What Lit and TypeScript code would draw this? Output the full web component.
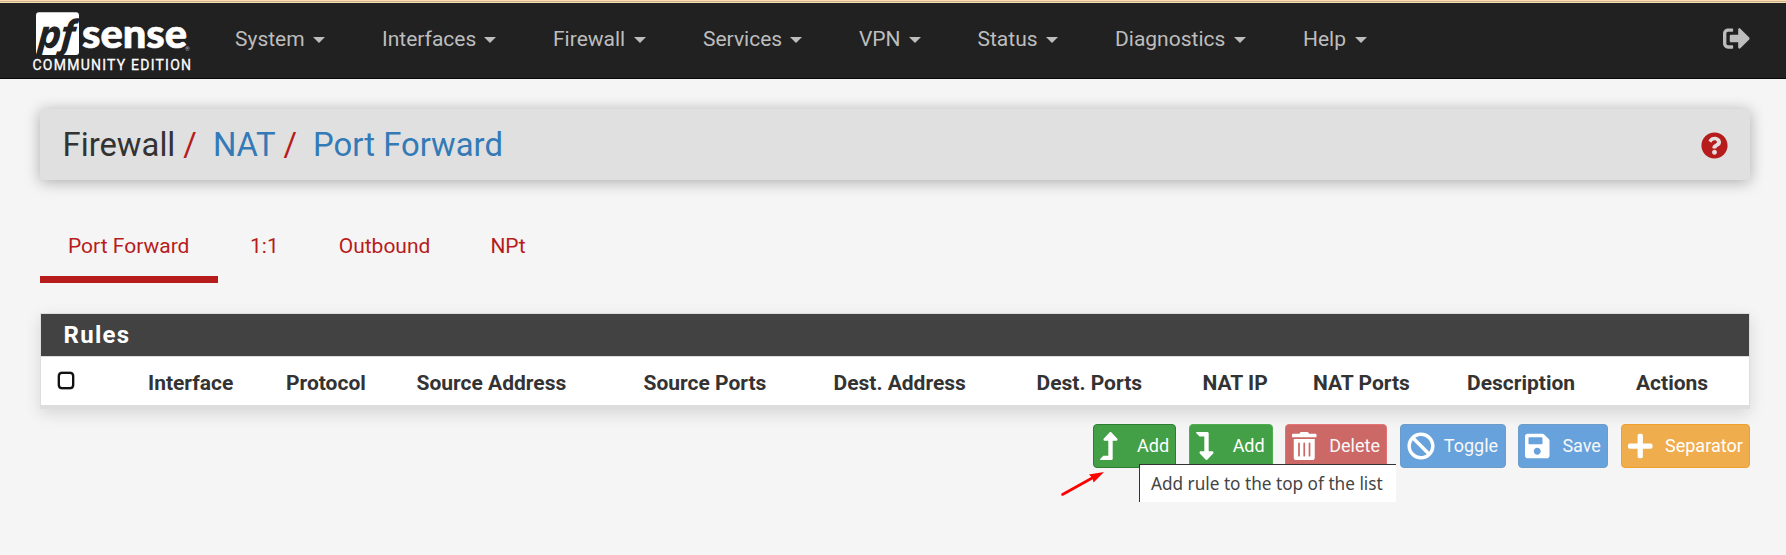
import { LitElement, html, css, svg } from "lit";
import { customElement } from "lit/decorators.js";

const levelUp =
  "M313.553 119.669L209.587 7.666c-9.485-10.214-25.676-10.229-35.174 0L70.438 119.669C56.232 134.969 67.062 160 88.025 160H152v272H68.024a11.996 11.996 0 0 0-8.485 3.515l-56 56C-4.021 499.074 1.333 512 12.024 512H208c13.255 0 24-10.745 24-24V160h63.966c20.878 0 31.851-24.969 17.587-40.331z";
const trash =
  "M32 464a48 48 0 0 0 48 48h288a48 48 0 0 0 48-48V128H32zm272-256a16 16 0 0 1 32 0v224a16 16 0 0 1-32 0zm-96 0a16 16 0 0 1 32 0v224a16 16 0 0 1-32 0zm-96 0a16 16 0 0 1 32 0v224a16 16 0 0 1-32 0zM432 32H312l-9.4-18.7A24 24 0 0 0 281.1 0H166.8a23.72 23.72 0 0 0-21.4 13.3L136 32H16A16 16 0 0 0 0 48v32a16 16 0 0 0 16 16h416a16 16 0 0 0 16-16V48a16 16 0 0 0-16-16z";
const ban =
  "M256 8C119.034 8 8 119.033 8 256s111.034 248 248 248 248-111.034 248-248S392.967 8 256 8zm130.108 117.892c65.448 65.448 70 165.481 20.677 235.637L150.47 105.216c70.204-49.356 170.226-44.735 235.638 20.676zM125.892 386.108c-65.448-65.448-70-165.481-20.677-235.637L361.53 406.784c-70.203 49.356-170.226 44.736-235.638-20.676z";
const save =
  "M433.941 129.941l-83.882-83.882A48 48 0 0 0 316.118 32H48C21.49 32 0 53.49 0 80v352c0 26.51 21.49 48 48 48h352c26.51 0 48-21.49 48-48V163.882a48 48 0 0 0-14.059-33.941zM224 416c-35.346 0-64-28.654-64-64 0-35.346 28.654-64 64-64s64 28.654 64 64c0 35.346-28.654 64-64 64zm96-304.52V212c0 6.627-5.373 12-12 12H76c-6.627 0-12-5.373-12-12V108c0-6.627 5.373-12 12-12h228.52c3.183 0 6.235 1.264 8.485 3.515l3.48 3.48A11.996 11.996 0 0 1 320 111.48z";
const plus =
  "M416 208H272V64c0-17.67-14.33-32-32-32h-32c-17.67 0-32 14.33-32 32v144H32c-17.67 0-32 14.33-32 32v32c0 17.67 14.33 32 32 32h144v144c0 17.67 14.33 32 32 32h32c17.67 0 32-14.33 32-32V304h144c17.67 0 32-14.33 32-32v-32c0-17.67-14.33-32-32-32z";
const signOut =
  "M497 273L329 441c-15 15-41 4.5-41-17v-96H152c-13.3 0-24-10.7-24-24v-96c0-13.3 10.7-24 24-24h136V88c0-21.4 25.9-32 41-17l168 168c9.3 9.4 9.3 24.6 0 34zM192 436v-40c0-6.6-5.4-12-12-12H96c-17.7 0-32-14.3-32-32V160c0-17.7 14.3-32 32-32h84c6.6 0 12-5.4 12-12V76c0-6.6-5.4-12-12-12H96c-53 0-96 43-96 96v192c0 53 43 96 96 96h84c6.6 0 12-5.4 12-12z";
const question =
  "M504 256c0 136.997-111.043 248-248 248S8 392.997 8 256C8 119.083 119.043 8 256 8s248 111.083 248 248zM262.655 90c-54.497 0-89.255 22.957-116.549 63.758-3.536 5.286-2.353 12.415 2.715 16.258l34.699 26.31c5.205 3.947 12.621 3.008 16.665-2.122 17.864-22.658 30.113-35.797 57.303-35.797 20.429 0 45.698 13.148 45.698 32.958 0 14.976-12.363 22.667-32.534 33.976C247.128 238.528 216 254.941 216 296v4c0 6.627 5.373 12 12 12h56c6.627 0 12-5.373 12-12v-1.333c0-28.462 83.186-29.647 83.186-106.667 0-58.002-60.165-102-116.531-102zM256 338c-25.365 0-46 20.635-46 46 0 25.364 20.635 46 46 46s46-20.636 46-46c0-25.364-20.635-46-46-46z";

const MENUS = ["System", "Interfaces", "Firewall", "Services", "VPN", "Status", "Diagnostics", "Help"];
const TABS = ["Port Forward", "1:1", "Outbound", "NPt"];
const COLUMNS = [
  "Interface", "Protocol", "Source Address", "Source Ports", "Dest. Address",
  "Dest. Ports", "NAT IP", "NAT Ports", "Description", "Actions",
];
const ACTIONS = [
  { label: "Add", kind: "success hovered", path: levelUp, w: 320, flip: false },
  { label: "Add", kind: "success", path: levelUp, w: 320, flip: true },
  { label: "Delete", kind: "danger", path: trash, w: 448, flip: false },
  { label: "Toggle", kind: "primary", path: ban, w: 512, flip: false },
  { label: "Save", kind: "primary", path: save, w: 448, flip: false },
  { label: "Separator", kind: "warning", path: plus, w: 448, flip: false },
];

@customElement("app-root")
export class AppRoot extends LitElement {
  static styles = css`
    :host {
      display: block;
      height: 555px;
      overflow: hidden;
      background: #f5f5f5;
      color: #333;
      font: 21px/30px Roboto, "Liberation Sans", sans-serif;
    }
    * { box-sizing: border-box; }
    .strip {
      height: 3px;
      background: linear-gradient(#fbdcae 0 1px, #cdb193 1px 2px, #fbdcae 2px 3px);
    }
    .navbar {
      height: 76px;
      background: #212121;
      border-bottom: 1px solid #080808;
      display: flex;
      padding: 0 36px 0 32px;
    }
    .brand { width: 203px; height: 75px; display: block; }
    .menus {
      display: grid;
      grid-template-columns: 90px 114px 93px 99px 61.5px 80.5px 131px 63.5px;
      column-gap: 57px;
      height: 72px;
      align-items: center;
      color: #bdbdbd;
    }
    .menu { display: flex; justify-content: space-between; align-items: center; white-space: nowrap; }
    .caret {
      border: 6px solid transparent;
      border-top-color: #bdbdbd;
      border-bottom: 0;
      margin-top: 2px;
    }
    .signout { margin: 21.5px 0 0 auto; width: 27px; height: 27px; fill: #bdbdbd; }
    main { padding: 30px 36px 0 40px; }
    .titlebar {
      height: 71px;
      background: #e0e0e0;
      border-radius: 4px;
      box-shadow: 0 2px 15px rgba(0, 0, 0, 0.3);
      display: flex;
      align-items: center;
      padding: 0 22px 0 22.5px;
    }
    .crumbs { display: flex; font-size: 32.85px; line-height: 40px; padding-top: 1px; white-space: nowrap; }
    .link { color: #337ab7; }
    .slash { color: #b71c1c; padding: 0 16px 0 8px; }
    .help { margin-left: auto; width: 27px; height: 27px; fill: #b71c1c; margin-top: 2px; }
    .tabs { display: flex; margin-top: 46px; color: #b71c1c; gap: 4px; }
    .tab { height: 57px; padding: 5px 28px 0; border-bottom: 7px solid transparent; }
    .tab.active { border-color: #b71c1c; width: 178px; }
    .panel {
      margin-top: 30px;
      background: #fff;
      border: 1px solid #ddd;
      border-bottom-width: 4px;
      box-shadow: 0 5px 15px rgba(0, 0, 0, 0.12);
    }
    .heading {
      height: 43px;
      background: #424242;
      border-bottom: 1px solid #ddd;
      color: #fff;
      font-size: 24px;
      font-weight: 700;
      line-height: 42px;
      letter-spacing: 1.3px;
      padding-left: 22.5px;
    }
    .columns {
      height: 48px;
      display: grid;
      grid-template-columns: 91px 138px 130.5px 227px 190px 203px 166px 110.5px 154px 169px 1fr;
      padding: 11px 0 0 16px;
      font-weight: 700;
      white-space: nowrap;
    }
    .check {
      width: 16px;
      height: 17px;
      margin: 3.5px 0 0 1px;
      border: 2px solid #111;
      border-radius: 4px;
      background: #fff;
      box-shadow: 0 0 0 0.5px #555;
    }
    .actions {
      position: relative;
      display: flex;
      justify-content: flex-end;
      margin-top: 15px;
      font-size: 18px;
    }
    .bar { display: grid; grid-template-columns: 83px 84px 102px 106px 90px 129px; gap: 0 12.6px; }
    .btn {
      height: 44px;
      border: 1px solid;
      border-radius: 4px;
      padding-left: 6px;
      display: flex;
      align-items: center;
      color: #fff;
    }
    .icon { width: 37px; height: 28px; fill: #fff; }
    .flip { transform: scaleY(-1); }
    .success { background: #43a047; border-color: #4cae4c; }
    .success.hovered { border-color: #2e7d32; }
    .danger { background: #cc6866; border-color: #e57373; }
    .primary { background: #67a2dc; border-color: #6c9cc8; }
    .warning { background: #f0ad4e; border-color: #ef9f2e; }
    .danger, .primary { color: #f8f8f8; }
    .tooltip {
      position: absolute;
      left: 1099px;
      top: 40px;
      width: 257px;
      height: 38px;
      background: #fff;
      border: solid #333;
      border-width: 1px 0 0 1px;
      padding-left: 11px;
      color: #444;
      font: 17.2px/37px "Noto Sans", sans-serif;
      white-space: nowrap;
    }
    .pointer { position: absolute; left: 1018px; top: 44px; width: 50px; height: 32px; }
  `;

  private brand() {
    return html`<svg class="brand" viewBox="32 3 203 75">
      ${svg`
        <rect x="36" y="12.3" width="43" height="42.7" rx="3" fill="#fff" />
        <g transform="translate(37.5 47.5) skewX(-7)">
          <text x="0" y="0" font-family="Inter" font-weight="800" font-style="italic" font-size="39"
            fill="#212121" textLength="36.5" lengthAdjust="spacingAndGlyphs">pf</text>
        </g>
        <text x="82" y="47.5" font-family="Lato" font-weight="900" font-size="40.5" fill="#fff"
          stroke="#fff" stroke-width="0.7"
          textLength="105" lengthAdjust="spacingAndGlyphs">sense</text>
        <text x="185" y="51" font-family="Roboto" font-size="6" fill="#bbb">®</text>
        <text x="32.5" y="70" font-family="Roboto" font-weight="400" font-size="14" fill="#fff"
          stroke="#fff" stroke-width="0.3" textLength="158.5">COMMUNITY EDITION</text>
      `}
    </svg>`;
  }

  render() {
    return html`
      <div class="strip"></div>
      <nav class="navbar">
        ${this.brand()}
        <div class="menus">
          ${MENUS.map((m) => html`<div class="menu"><span>${m}</span><i class="caret"></i></div>`)}
        </div>
        <svg class="signout" viewBox="0 0 512 512"><path d=${signOut} /></svg>
      </nav>
      <main>
        <header class="titlebar">
          <div class="crumbs">
            <span>Firewall</span><span class="slash">/</span>
            <span class="link">NAT</span><span class="slash">/</span>
            <span class="link">Port Forward</span>
          </div>
          <svg class="help" viewBox="0 0 512 512"><path d=${question} /></svg>
        </header>
        <div class="tabs">
          ${TABS.map((t, i) => html`<div class="tab ${i === 0 ? "active" : ""}">${t}</div>`)}
        </div>
        <section class="panel">
          <div class="heading">Rules</div>
          <div class="columns">
            <span class="check"></span>
            ${COLUMNS.map((c) => html`<span>${c}</span>`)}
          </div>
        </section>
        <div class="actions">
          <div class="bar">
            ${ACTIONS.map(
              (a) => html`<div class="btn ${a.kind}">
                <svg class="icon ${a.flip ? "flip" : ""}" viewBox="0 0 ${a.w} 512" preserveAspectRatio="xMinYMid meet">
                  <path d=${a.path} />
                </svg>
                <span>${a.label}</span>
              </div>`
            )}
          </div>
          <div class="tooltip">Add rule to the top of the list</div>
          <svg class="pointer" viewBox="1058 468 50 32">
            <path d="M1062.5 494.5L1094 477" stroke="#f00" stroke-width="2.6" stroke-linecap="round" />
            <path d="M1104 472L1089 474.5L1092.5 478L1093.5 482.5Z" fill="#f00" />
          </svg>
        </div>
      </main>
    `;
  }
}
